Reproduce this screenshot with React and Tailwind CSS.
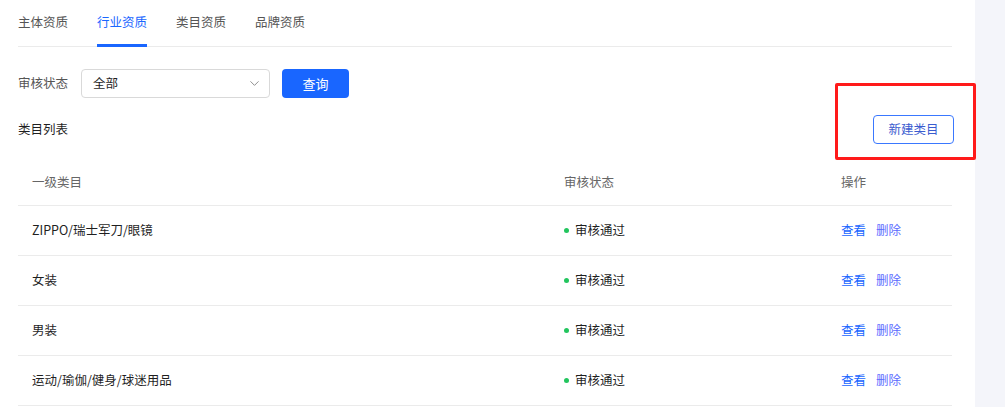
import { ChevronDown } from 'lucide-react'

const tabs = ['主体资质', '行业资质', '类目资质', '品牌资质']

const rows = ['ZIPPO/瑞士军刀/眼镜', '女装', '男装', '运动/瑜伽/健身/球迷用品']

export default function App() {
  return (
    <div
      className="flex h-[407px] w-[1005px] overflow-hidden bg-[#f4f5fa] text-[12.5px] text-[#1f1f1f]"
      style={{ fontFamily: '"Noto Sans CJK SC", "Noto Sans", sans-serif' }}
    >
      <div className="relative h-full w-[975px] bg-white pl-[18px] pr-[23px]">
        <div className="flex h-[47px] gap-[29px] border-b border-[#ebebeb]">
          {tabs.map((t, i) => (
            <div
              key={t}
              className={
                i === 1
                  ? 'flex h-[47px] items-center border-b-[3px] border-[#1966ff] pb-[2px] pt-[2px] text-[#1966ff]'
                  : 'flex h-[47px] items-center border-b-[3px] border-transparent pb-[2px] pt-[2px] text-[#555]'
              }
            >
              {t}
            </div>
          ))}
        </div>

        <div className="mt-[22px] flex h-[29px] items-center">
          <span className="w-[63px] text-[#555]">审核状态</span>
          <div className="flex h-[29px] w-[189px] items-center justify-between rounded-[4px] border border-[#d9d9d9] pl-[11px] pr-[7px]">
            <span>全部</span>
            <ChevronDown className="h-[15px] w-[15px] text-[#888]" strokeWidth={1.5} />
          </div>
          <button
            type="button"
            className="ml-[12px] h-[29px] w-[67px] rounded-[4px] bg-[#1966ff] text-[13px] text-white"
          >
            查询
          </button>
        </div>

        <div className="mt-[17px] mr-[-2px] flex h-[29px] items-center justify-between">
          <span className="text-[#1f1f1f]">类目列表</span>
          <button
            type="button"
            className="h-[29px] w-[81px] rounded-[4px] border border-[#3a78ff] text-[#3a5ccf]"
          >
            新建类目
          </button>
        </div>

        <div className="mt-[15px]">
          <div className="grid h-[47px] grid-cols-[533px_276px_1fr] items-center border-b border-[#ebebeb] text-[#666]">
            <span className="pl-[14px]">一级类目</span>
            <span className="pl-[13px]">审核状态</span>
            <span className="pl-[14px]">操作</span>
          </div>
          {rows.map((r) => (
            <div
              key={r}
              className="grid h-[50px] grid-cols-[533px_276px_1fr] items-center border-b border-[#ebebeb]"
            >
              <span className="pl-[14px]">{r}</span>
              <span className="flex items-center pl-[13px]">
                <span className="mr-[6px] h-[5px] w-[5px] rounded-full bg-[#22c55e]" />
                审核通过
              </span>
              <span className="flex gap-[10px] pl-[14px]">
                <span className="text-[#1966ff]">查看</span>
                <span className="text-[#5b6cff]">删除</span>
              </span>
            </div>
          ))}
        </div>

        <div className="pointer-events-none absolute left-[835px] top-[83px] h-[77px] w-[141px] rounded-[2px] border-[3px] border-[#ff1a1a]" />
      </div>
    </div>
  )
}
